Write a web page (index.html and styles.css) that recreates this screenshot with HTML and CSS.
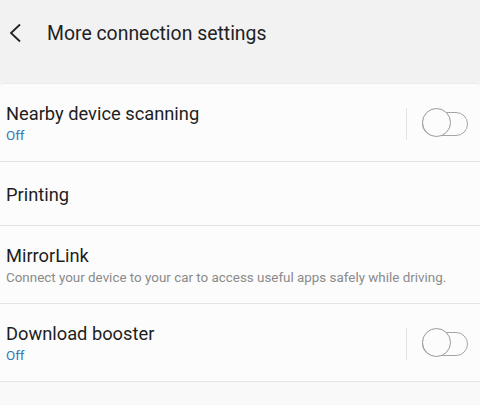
FILE: index.html
```html
<!DOCTYPE html>
<html lang="en">

<head>
    <meta charset="UTF-8">
    <meta name="viewport" content="width=device-width, initial-scale=1.0">
    <title>More connection settings</title>
    <link rel="stylesheet" href="styles.css">
</head>

<body>
    <div class="header">
        <svg class="back" width="14" height="20" viewBox="0 0 14 20">
            <path d="M12 1.5 L3 10 L12 18.5" fill="none" stroke="#222" stroke-width="1.8" />
        </svg>
        <h1>More connection settings</h1>
    </div>

    <div class="card">
        <div class="row">
            <div class="text">
                <div class="title">Nearby device scanning</div>
                <div class="sub off">Off</div>
            </div>
            <div class="switch-wrap">
                <div class="switch"><span class="knob"></span></div>
            </div>
        </div>

        <div class="row short">
            <div class="text">
                <div class="title">Printing</div>
            </div>
        </div>

        <div class="row">
            <div class="text">
                <div class="title">MirrorLink</div>
                <div class="sub">Connect your device to your car to access useful apps safely while driving.</div>
            </div>
        </div>

        <div class="row">
            <div class="text">
                <div class="title">Download booster</div>
                <div class="sub off">Off</div>
            </div>
            <div class="switch-wrap">
                <div class="switch"><span class="knob"></span></div>
            </div>
        </div>
    </div>
</body>

</html>
```

FILE: styles.css
```css
body {
    margin: 0;
    background: #f9f9f9;
    font-family: Roboto, "Noto Sans", sans-serif;
    color: #1e1e1e;
}

.header {
    height: 83px;
    background: #f2f2f2;
    display: flex;
    align-items: flex-start;
    padding-top: 22px;
    box-sizing: border-box;
}

.back {
    margin-left: 8px;
    margin-top: 1px;
}

h1 {
    margin: 0 0 0 25px;
    font-size: 19.4px;
    font-weight: 400;
    color: #222;
}

.card {
    background: #fcfcfc;
    border-top: 1px solid #ececec;
    border-radius: 4px 4px 0 0;
}

.row {
    display: flex;
    align-items: center;
    height: 78px;
    border-bottom: 1px solid #e4e4e4;
    padding: 2px 12px 0 6px;
    box-sizing: border-box;
}

.row.short {
    height: 64px;
}

.text {
    flex: 1;
}

.title {
    font-size: 18.3px;
    line-height: 22px;
}

.sub {
    font-size: 13.4px;
    line-height: 18px;
    color: #8a8a8a;
    margin-top: 2px;
}

.sub.off {
    color: #2f7ab9;
}

.switch-wrap {
    border-left: 1px solid #e4e4e4;
    height: 32px;
    display: flex;
    align-items: center;
    padding-left: 15px;
}

.switch {
    position: relative;
    width: 44px;
    height: 22px;
    border: 1.5px solid #a5a5a5;
    border-radius: 12px;
}

.knob {
    position: absolute;
    left: -1.5px;
    top: -4.5px;
    width: 27px;
    height: 27px;
    border: 1.5px solid #9a9a9a;
    border-radius: 50%;
    background: #fcfcfc;
}
```
